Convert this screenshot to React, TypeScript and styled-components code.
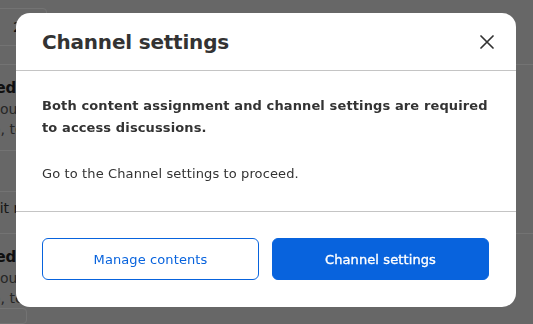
import styled, { createGlobalStyle } from 'styled-components'

const Global = createGlobalStyle`
  html, body {
    margin: 0;
    padding: 0;
    background: #e4e4e4;
    font-family: 'DejaVu Sans', Verdana, sans-serif;
    color: #333;
  }
  * { box-sizing: border-box; }
`

const Page = styled.div`
  width: 533px;
  height: 324px;
  overflow: hidden;
  display: flex;
  flex-direction: column;
`

const Toolbar = styled.div`
  display: flex;
  flex: none;
  padding-top: 8px;
  height: 65px;
  border-bottom: 1px solid #fff;
`

const PageButton = styled.div`
  width: 57px;
  height: 38px;
  margin-left: -10px;
  border: 1px solid #fff;
  border-radius: 4px;
  display: flex;
  align-items: center;
  padding-left: 22px;
  font-size: 14px;
  color: #222;
`

const Group = styled.div`
  flex: none;
  border-bottom: 1px solid #fff;
`

const Item = styled.div<{ $divided?: boolean }>`
  width: 480px;
  height: ${({ $divided }) => ($divided ? '86px' : '85px')};
  padding-top: 12px;
  margin-left: -82px;
  border-bottom: ${({ $divided }) => ($divided ? '1px solid #fff' : 'none')};
  white-space: nowrap;
  .name {
    font-weight: bold;
    font-size: 15px;
    line-height: 22px;
    color: #222;
  }
  .meta {
    font-size: 14px;
    line-height: 20px;
    color: #555;
  }
`

const Note = styled.div`
  margin-top: 40px;
  width: 480px;
  height: 42px;
  border-top: 1px solid #fff;
  margin-left: -18px;
  font-size: 14px;
  line-height: 32px;
  color: #333;
`

const BottomButton = styled.div`
  width: 40px;
  height: 38px;
  margin-left: -13px;
  border: 1px solid #fff;
  border-radius: 4px;
`

const Overlay = styled.div`
  position: fixed;
  inset: 0;
  background: rgba(0, 0, 0, 0.55);
`

const Modal = styled.div`
  position: fixed;
  left: 16px;
  top: 13px;
  width: 500px;
  background: #fff;
  border-radius: 14px;
  display: flex;
  flex-direction: column;
`

const Header = styled.div`
  height: 58px;
  display: flex;
  align-items: center;
  justify-content: space-between;
  padding: 0 22px 0 26px;
  border-bottom: 1px solid #c4c4c4;
  h2 {
    margin: 0;
    font-size: 20px;
    font-weight: bold;
    color: #333;
    letter-spacing: -0.2px;
  }
`

const Close = styled.button`
  border: none;
  background: none;
  padding: 0;
  width: 14px;
  height: 18px;
  display: flex;
  align-items: center;
  justify-content: center;
`

const Body = styled.div`
  padding: 24px 26px 26px 26px;
  border-bottom: 1px solid #c4c4c4;
  font-size: 13px;
  line-height: 22px;
  letter-spacing: 0.12px;
  color: #333;
  p {
    margin: 0;
  }
  p + p {
    margin-top: 24px;
  }
  strong {
    font-weight: bold;
  }
`

const Footer = styled.div`
  padding: 26px 27px 27px 26px;
  display: grid;
  grid-template-columns: 1fr 1fr;
  gap: 13px;
`

const Button = styled.button<{ $primary?: boolean }>`
  height: 42px;
  border-radius: 6px;
  font-family: 'DejaVu Sans', Verdana, sans-serif;
  font-size: 13px;
  font-weight: normal;
  border: 1px solid #0863dd;
  background: ${({ $primary }) => ($primary ? '#0863dd' : '#fff')};
  color: ${({ $primary }) => ($primary ? '#fff' : '#0863dd')};
  -webkit-text-stroke: ${({ $primary }) => ($primary ? '0.35px #fff' : '0')};
  letter-spacing: 0.1px;
`

export default function App() {
  return (
    <>
      <Global />
      <Page>
        <Toolbar>
          <PageButton>2</PageButton>
        </Toolbar>
        <Group>
          <Item $divided>
            <div className='name'>Unassigned</div>
            <div className='meta'>Default announcement</div>
            <div className='meta'>Open group, text</div>
          </Item>
          <Note>Edit rules</Note>
        </Group>
        <Item>
          <div className='name'>Unassigned</div>
          <div className='meta'>Default announcement</div>
          <div className='meta'>Open group, text</div>
        </Item>
        <BottomButton />
      </Page>
      <Overlay />
      <Modal role='dialog'>
        <Header>
          <h2>Channel settings</h2>
          <Close aria-label='Close'>
            <svg width='14' height='14' viewBox='0 0 14 14'>
              <path d='M1 1L13 13M13 1L1 13' stroke='#333' strokeWidth='1.7' strokeLinecap='round' />
            </svg>
          </Close>
        </Header>
        <Body>
          <p>
            <strong>Both content assignment and channel settings are required to access discussions.</strong>
          </p>
          <p>Go to the Channel settings to proceed.</p>
        </Body>
        <Footer>
          <Button>Manage contents</Button>
          <Button $primary>Channel settings</Button>
        </Footer>
      </Modal>
    </>
  )
}
